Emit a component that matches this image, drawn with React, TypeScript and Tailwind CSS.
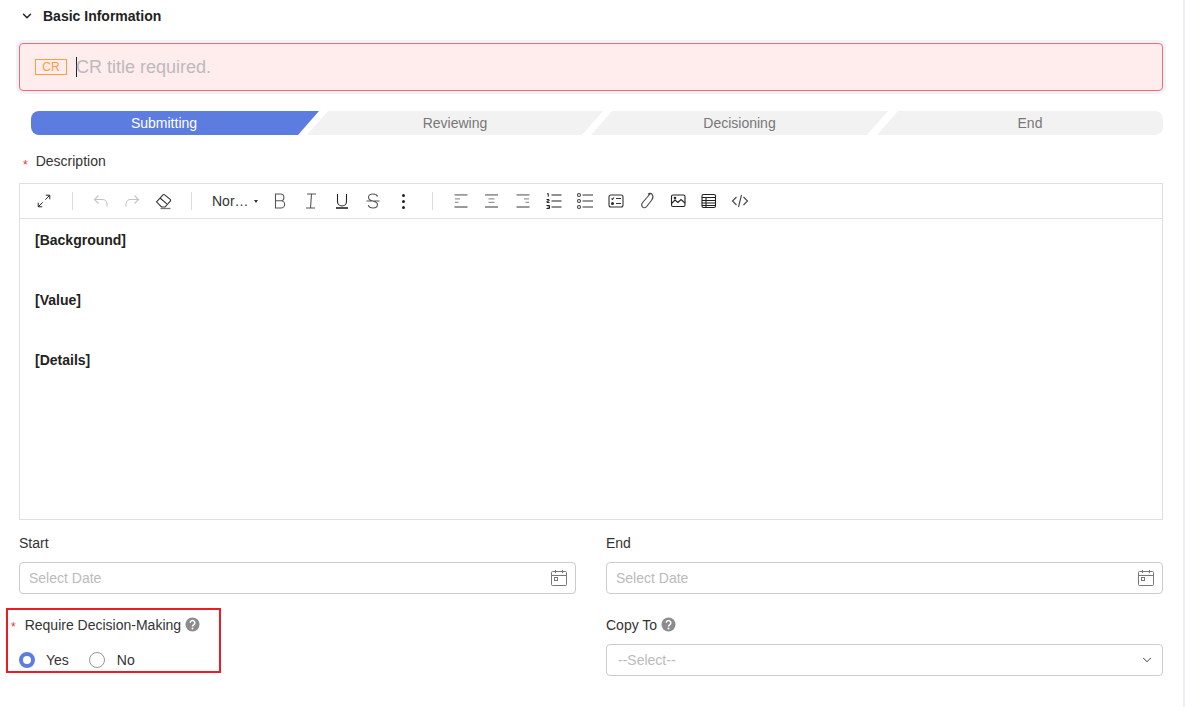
import { ChevronDown } from 'lucide-react';
import React from 'react';

const Ico: React.FC<{ children: React.ReactNode; className?: string; size?: number }> = ({ children, className = 'text-[#555]', size = 18 }) => (
  <svg width={size} height={size} viewBox="0 0 18 18" fill="none" stroke="currentColor" strokeWidth="1.1" className={className}>
    {children}
  </svg>
);

const steps = [
  { name: 'Reviewing', cls: 'w-[296px] [clip-path:polygon(21px_0,100%_0,calc(100%-21px)_100%,0_100%)]' },
  { name: 'Decisioning', cls: 'w-[297px] [clip-path:polygon(21px_0,100%_0,calc(100%-21px)_100%,0_100%)]' },
];

const CalendarIcon = () => (
  <svg width="18" height="18" viewBox="0 0 18 18" fill="none" stroke="#777" strokeWidth="1">
    <rect x="1.5" y="2.5" width="15" height="14" rx="1" />
    <path d="M1.5 6.5h15M5.5 1v3M12.5 1v3" />
    <rect x="4.5" y="8.5" width="3" height="3" />
  </svg>
);

const HelpIcon = () => (
  <svg width="15" height="15" viewBox="0 0 15 15" className="ml-1">
    <circle cx="7.5" cy="7.500" r="7" fill="#8c8c8c" />
    <path d="M5.200 5.800a2.300 2.300 0 1 1 3.500 2c-.8.500-1.200.9-1.200 1.700" fill="none" stroke="#fff" strokeWidth="1.500" />
    <circle cx="7.500" cy="11.500" r="1" fill="#fff" />
  </svg>
);

const DateField: React.FC<{ label: string }> = ({ label }) => (
  <div>
    <div className="h-[19px] text-sm leading-[19px] text-[#333]">{label}</div>
    <div className="mt-[9px] flex h-8 items-center justify-between rounded border border-[#ccc] pl-[9px] pr-[7px] text-sm text-[#bbb]">
      <span>Select Date</span>
      <CalendarIcon />
    </div>
  </div>
);

export default function App() {
  return (
    <div className="relative h-[707px] overflow-hidden border-r-2 border-[#eeeef4] bg-white pl-[19px] pr-5 font-['Liberation_Sans',Arial,sans-serif]">
      {/* section header */}
      <div className="flex h-[32px] items-center gap-[9px] pl-[1px]">
        <ChevronDown size={14} strokeWidth={2.5} className="text-[#222]" />
        <span className="text-sm font-bold text-[#222]">Basic Information</span>
      </div>

      {/* title */}
      <div className="mt-[11px] flex h-12 items-center rounded border border-[#f56c6c] bg-[#ffecec] pl-[15px] shadow-[0_0_0_3px_#f0f3fc]">
        <span className="flex h-4 w-8 items-center justify-center border border-[#ff9c40] text-xs text-[#ff9c40]">CR</span>
        <span className="ml-[9px] h-5 w-px bg-[#222]"></span>
        <span className="-ml-px text-lg text-[#bbb]">CR title required.</span>
      </div>

      {/* stepper */}
      <div className="ml-3 mt-5 flex h-6 text-sm leading-6">
        <div className="w-[288px] rounded-l-lg bg-[#5d7ce0] pr-[22px] text-center text-white [clip-path:polygon(0_0,100%_0,calc(100%-21px)_100%,0_100%)]">Submitting</div>
        {steps.map(s => (
          <div key={s.name} className={`-ml-3 bg-[#f2f2f2] text-center text-[#777] ${s.cls}`}>{s.name}</div>
        ))}
        <div className="-ml-[11px] flex-1 rounded-r-lg bg-[#f2f2f2] pl-[20px] text-center text-[#777] [clip-path:polygon(21px_0,100%_0,100%_100%,0_100%)]">End</div>
      </div>

      {/* description */}
      <div className="mt-4 flex h-[19px] items-center text-sm text-[#333]">
        <span className="mr-[8px] ml-1 mt-2 text-xs leading-none text-[#e33]">*</span>
        Description
      </div>

      <div className="mt-[13px] h-[337px] border border-[#e0e0e0]">
        <div className="flex h-[35px] items-center border-b border-[#e0e0e0] pl-4">
          <Ico size={16} className="text-[#222]"><path d="M11 2.5h4.5V7M15.5 2.5 10.5 7.5M7 15.5H2.5V11M2.5 15.5l5-5" /></Ico>
          <span className="ml-5 h-[18px] w-px bg-[#ddd]"></span>
          <div className="ml-[19px] flex gap-[13px]">
            <Ico className="text-[#c4c4c4]"><path d="M6.5 3.5 2.5 7.5l4 4M2.5 7.5h8a4.5 4.5 0 0 1 4.5 4.5v2.5" /></Ico>
            <Ico className="text-[#c4c4c4]"><path d="M11.5 3.5l4 4-4 4M15.5 7.5h-8A4.5 4.5 0 0 0 3 12v2.5" /></Ico>
          </div>
          <div className="ml-[13px]">
            <Ico className="text-[#333]"><path d="M2.500 9.800 9 2.800a1.200 1.200 0 0 1 1.700 0l5.500 4.600a1.200 1.200 0 0 1 .1 1.700L11 15H7.500zM6 6l6.800 5.800" /><path d="M6.500 16.500h10" stroke="#777" strokeWidth="1.300" /></Ico>
          </div>
          <span className="ml-[19px] h-[18px] w-px bg-[#ddd]"></span>
          <span className="ml-5 text-sm text-[#333]">Nor…</span>
          <span className="ml-[5px] mr-[13px] h-0 w-0 border-x-[2.5px] border-t-[3px] border-x-transparent border-t-[#333]"></span>
          <div className="flex gap-[13px]">
            <Ico><path d="M4.500 2h5a3.200 3.200 0 0 1 0 6.800h-5zM4.500 8.800h5.500a3.500 3.500 0 0 1 0 7.200H4.500z" /></Ico>
            <Ico><path d="M5 2h9M4 16h9M9.500 2l-1 14" /></Ico>
            <Ico className="text-[#222]"><path d="M4.500 2v7.500a4.500 4.500 0 0 0 9 0V2" /><path d="M3 16h12" strokeWidth="1.600" /></Ico>
            <Ico><path d="M13.500 4.500c-.5-1.500-2-2.500-4.500-2.500-2.800 0-4.500 1.300-4.500 3.400C4.500 10 13.500 8 13.500 12.600c0 2-1.800 3.400-4.500 3.400-2.600 0-4.200-1-4.700-2.800M2.500 9h13" /></Ico>
          </div>
          <div className="ml-[13px] flex w-[18px] flex-col items-center gap-[3px]">
            <span className="h-[3px] w-[3px] rounded-full bg-[#222]"></span>
            <span className="h-[3px] w-[3px] rounded-full bg-[#222]"></span>
            <span className="h-[3px] w-[3px] rounded-full bg-[#222]"></span>
          </div>
          <span className="ml-[19px] h-[18px] w-px bg-[#ddd]"></span>
          <div className="ml-[19px] flex gap-[13px]">
            <Ico className="text-[#999]"><path d="M2.500 2.800h13M2.500 15h13" strokeWidth="1.800" /><path d="M3 6.800h5M3 10.300h3.500" strokeWidth="1.300" /></Ico>
            <Ico className="text-[#999]"><path d="M2 2.800h13M2 15h13" strokeWidth="1.800" /><path d="M5.500 6.800h6M5.500 10.300h6" strokeWidth="1.300" /></Ico>
            <Ico className="text-[#999]"><path d="M2.500 2.800h13M2.500 15h13" strokeWidth="1.800" /><path d="M10 6.800h5M11.500 10.300h3.500" strokeWidth="1.300" /></Ico>
            <Ico className="text-[#222]">
              <path d="M6.500 3h10M6.500 9h10M6.500 15h10" />
              <path d="M2 2l1.300-.5v3.200M1.500 7.500h2.500v1.500h-2v1.500h2.500M1.500 13.500h3v3h-3M2.500 15h2" strokeWidth="1" />
            </Ico>
            <Ico className="text-[#777]">
              <circle cx="3" cy="3" r="1.500" stroke="#444" /><circle cx="3" cy="9" r="1.500" stroke="#444" /><circle cx="3" cy="15" r="1.500" stroke="#444" />
              <path d="M6.500 3h10.500M6.500 9h10.500M6.500 15h10.500" strokeWidth="1.500" />
            </Ico>
            <Ico className="text-[#333]">
              <rect x="2" y="3" width="14" height="12" rx="2" />
              <path d="M4.500 6.500l1 1 1.500-2M9 6.500h5M9 11.500h5" />
              <circle cx="5.500" cy="11.500" r="1" fill="currentColor" />
            </Ico>
            <Ico className="text-[#444]"><path d="M12.500 1.500 5 10c-1.500 1.800-1.500 3.800-.5 5s3 1 4.200-.5l5-6.500c1.500-2 1.500-4 .5-5.500s-3-1.500-4.200-.2" /></Ico>
            <Ico className="text-[#222]">
              <rect x="2.500" y="3" width="13.500" height="11.500" rx="1.500" />
              <path d="M2.500 11.500l3.500-3.500 3 2.500 3-3 4 3.500" />
              <circle cx="6" cy="6" r=".8" />
            </Ico>
            <Ico className="text-[#222]">
              <rect x="2" y="2.500" width="13.500" height="13" rx="1.500" />
              <path d="M2 5.500h13.500M2 8.500h13.500M2 11h13.500M2 13.500h13.500M6 5.500v10" />
            </Ico>
            <Ico className="text-[#444]"><path d="M5.500 5 1.500 9l4 4M12.500 5l4 4-4 4M10.500 3l-3 12" /></Ico>
          </div>
        </div>
        <div className="pl-[15px] pt-[11px] text-sm font-bold leading-5 text-[#222]">
          <p className="mb-10">[Background]</p>
          <p className="mb-10">[Value]</p>
          <p>[Details]</p>
        </div>
      </div>

      {/* dates */}
      <div className="mt-[14px] grid grid-cols-2 gap-[30px]">
        <DateField label="Start" />
        <DateField label="End" />
      </div>

      {/* bottom row */}
      <div className="mt-[21px] grid grid-cols-2 gap-[30px]">
        <div className="relative">
          <div className="flex h-[19px] items-center text-sm text-[#333]">
            <span className="mr-[9px] -ml-2 mt-1 text-xs leading-none text-[#e33]">*</span>
            Require Decision-Making
            <HelpIcon />
          </div>
          <div className="mt-[18px] flex h-4 items-center text-sm text-[#333]">
            <span className="h-4 w-4 rounded-full border-[4px] border-[#5d7ce0] bg-white"></span>
            <span className="ml-[11px]">Yes</span>
            <span className="ml-5 h-4 w-4 rounded-full border border-[#999] bg-white"></span>
            <span className="ml-3">No</span>
          </div>
          {/* red annotation */}
          <div className="absolute -left-[13px] -top-[7px] h-[65px] w-[215px] border-2 border-[#ed1c24]"></div>
        </div>
        <div>
          <div className="flex h-[19px] items-center text-sm text-[#333]">
            Copy To
            <HelpIcon />
          </div>
          <div className="mt-[10px] flex h-8 items-center justify-between rounded border border-[#ccc] pl-[11px] pr-[8px] text-sm text-[#bbb]">
            <span>--Select--</span>
            <ChevronDown size={14} strokeWidth={1.5} className="text-[#222]" />
          </div>
        </div>
      </div>
    </div>
  );
}
